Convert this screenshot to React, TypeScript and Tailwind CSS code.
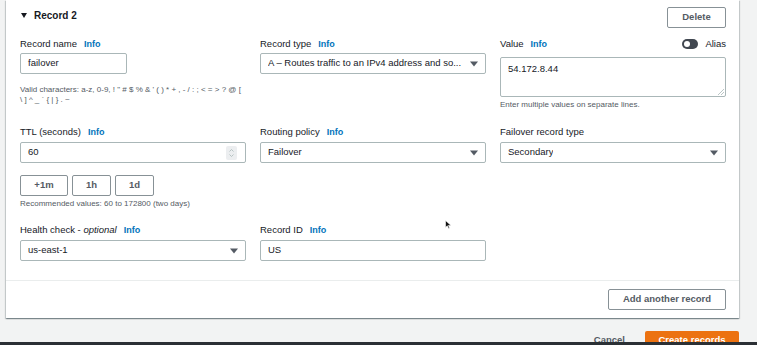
import React from "react";

const font = "font-['Liberation_Sans',Arial,sans-serif]";

function Info() {
  return <span className="text-[9px] font-bold text-[#0073bb]">Info</span>;
}

function Label({ children, info = true }: { children: React.ReactNode; info?: boolean }) {
  return (
    <div className="flex h-[14px] items-center gap-[7px] text-[9.5px] leading-[14px] text-[#16191f]">
      <span>{children}</span>
      {info && <Info />}
    </div>
  );
}

function Caret() {
  return (
    <svg width="8" height="6" viewBox="0 0 8 6" className="shrink-0">
      <path d="M0 0.5h8L4 5.5z" fill="#545b64" />
    </svg>
  );
}

function Select({ value, className = "" }: { value: string; className?: string }) {
  return (
    <div
      className={`flex h-[21px] items-center justify-between rounded-[2px] border border-[#aab7b8] bg-white pl-[7px] pr-[7px] text-[9.5px] text-[#16191f] ${className}`}
    >
      <span className="whitespace-nowrap overflow-hidden">{value}</span>
      <Caret />
    </div>
  );
}

function TextInput({ value, className = "", children }: { value: string; className?: string; children?: React.ReactNode }) {
  return (
    <div
      className={`flex h-[21px] items-center justify-between rounded-[2px] border border-[#aab7b8] bg-white px-[7px] text-[9.5px] text-[#16191f] ${className}`}
    >
      <span>{value}</span>
      {children}
    </div>
  );
}

function Btn({ children, className = "" }: { children: React.ReactNode; className?: string }) {
  return (
    <div
      className={`flex h-[21px] items-center justify-center rounded-[2px] border border-[#879196] bg-white text-[9.5px] font-bold text-[#545b64] ${className}`}
    >
      {children}
    </div>
  );
}

export default function App() {
  return (
    <div className={`relative h-[345px] w-[757px] overflow-hidden bg-[#f2f3f3] ${font}`}>
      <div className="pl-[6px] pr-[18px]">
        {/* record panel */}
        <div className="bg-white shadow-[0_1px_1px_0_rgba(0,28,36,0.3),1px_1px_1px_0_rgba(0,28,36,0.15),-1px_1px_1px_0_rgba(0,28,36,0.15)]">
          <div className="pl-[14px] pr-[13px] pb-[19px] pt-[7px]">
            <div className="flex items-start justify-between">
              <div className="mt-[1px] flex h-[14px] items-center gap-[7px] text-[10px] font-bold text-[#16191f]">
                <svg width="6" height="5" viewBox="0 0 6 5" className="ml-[1px]">
                  <path d="M0 0h6L3 5z" fill="#16191f" />
                </svg>
                <span>Record 2</span>
              </div>
              <Btn className="w-[59px]">Delete</Btn>
            </div>

            {/* row 1 */}
            <div className="mt-[9px] grid grid-cols-3 gap-x-[14px]">
              <div>
                <Label>Record name</Label>
                <TextInput value="failover" className="mt-[2px] w-[107px]" />
                <div className="mt-[11px] text-[8px] leading-[10px] text-[#545b64]">
                  <div className="whitespace-nowrap">Valid characters: a-z, 0-9, ! " # $ % &amp; ' ( ) * + , - / : ; &lt; = &gt; ? @ [</div>
                  <div className="whitespace-nowrap">\ ] ^ _ ` {"{"} | {"}"} . ~</div>
                </div>
              </div>
              <div>
                <Label>Record type</Label>
                <Select value="A – Routes traffic to an IPv4 address and so..." className="mt-[2px]" />
              </div>
              <div>
                <div className="flex h-[14px] items-center justify-between">
                  <Label>Value</Label>
                  <div className="flex items-center gap-[7px] text-[9.5px] text-[#16191f]">
                    <div className="flex h-[10px] w-[16px] items-center rounded-full bg-[#414750] px-[2px]">
                      <div className="h-[6px] w-[6px] rounded-full bg-white" />
                    </div>
                    <span>Alias</span>
                  </div>
                </div>
                <div className="relative mt-[6px] h-[40px] rounded-[2px] border border-[#aab7b8] px-[7px] pt-[4px] text-[9.5px] leading-[14px] text-[#16191f]">
                  54.172.8.44
                  <svg width="6" height="6" viewBox="0 0 6 6" className="absolute bottom-[1px] right-[1px]">
                    <path d="M6 0L0 6M6 3L3 6" stroke="#aab7b8" strokeWidth="0.8" />
                  </svg>
                </div>
                <div className="mt-[3px] text-[8px] leading-[10px] text-[#545b64]">
                  Enter multiple values on separate lines.
                </div>
              </div>
            </div>

            {/* row 2 */}
            <div className="mt-[15px] grid grid-cols-3 gap-x-[14px]">
              <div>
                <Label>TTL (seconds)</Label>
                <TextInput value="60" className="mt-[3px] pr-[8px]">
                  <div className="flex h-[14px] w-[11px] flex-col items-center justify-center gap-[2px] rounded-[2px] bg-[#eceef0]">
                    <svg width="5" height="3" viewBox="0 0 5 3">
                      <path d="M0.5 2.5L2.5 0.5L4.5 2.5" stroke="#aab7b8" strokeWidth="0.8" fill="none" />
                    </svg>
                    <svg width="5" height="3" viewBox="0 0 5 3">
                      <path d="M0.5 0.5L2.5 2.5L4.5 0.5" stroke="#aab7b8" strokeWidth="0.8" fill="none" />
                    </svg>
                  </div>
                </TextInput>
                <div className="mt-[12px] flex gap-[4px]">
                  <Btn className="w-[48px]">+1m</Btn>
                  <Btn className="w-[39px]">1h</Btn>
                  <Btn className="w-[39px]">1d</Btn>
                </div>
                <div className="mt-[3px] text-[8px] leading-[10px] text-[#545b64]">
                  Recommended values: 60 to 172800 (two days)
                </div>
              </div>
              <div>
                <Label>Routing policy</Label>
                <Select value="Failover" className="mt-[3px]" />
              </div>
              <div>
                <Label info={false}>Failover record type</Label>
                <Select value="Secondary" className="mt-[3px]" />
              </div>
            </div>

            {/* row 3 */}
            <div className="mt-[14px] grid grid-cols-3 gap-x-[14px]">
              <div>
                <Label>
                  Health check - <i>optional</i>
                </Label>
                <Select value="us-east-1" className="mt-[3px] h-[20px]" />
              </div>
              <div>
                <Label>Record ID</Label>
                <TextInput value="US" className="mt-[3px] h-[20px]" />
              </div>
              <div />
            </div>
          </div>

          <div className="flex justify-end border-t border-[#eaeded] pb-[8px] pl-[14px] pr-[13px] pt-[8px]">
            <Btn className="w-[118px]">Add another record</Btn>
          </div>
        </div>

        {/* page actions */}
        <div className="mt-[13px] flex items-start justify-end gap-[20px]">
          <span className="pt-[2px] text-[9.5px] font-bold leading-[14px] text-[#545b64]">Cancel</span>
          <div className="flex h-[22px] w-[94px] items-start justify-center rounded-[2px] bg-[#ec7211] pt-[2px] text-[9.5px] font-bold leading-[14px] text-white">
            Create records
          </div>
        </div>
      </div>

      {/* mouse pointer */}
      <svg width="7" height="9" viewBox="0 0 7 9" className="absolute left-[445px] top-[220px]">
        <path d="M0.5 0.5L0.5 7.5L2.3 5.8L3.6 8.5L4.6 8L3.4 5.4L6 5.4Z" fill="#111" stroke="#fff" strokeWidth="0.6" />
      </svg>

      <div className="absolute bottom-0 left-0 right-0 h-[3px] bg-[#2b3035]" />
    </div>
  );
}
